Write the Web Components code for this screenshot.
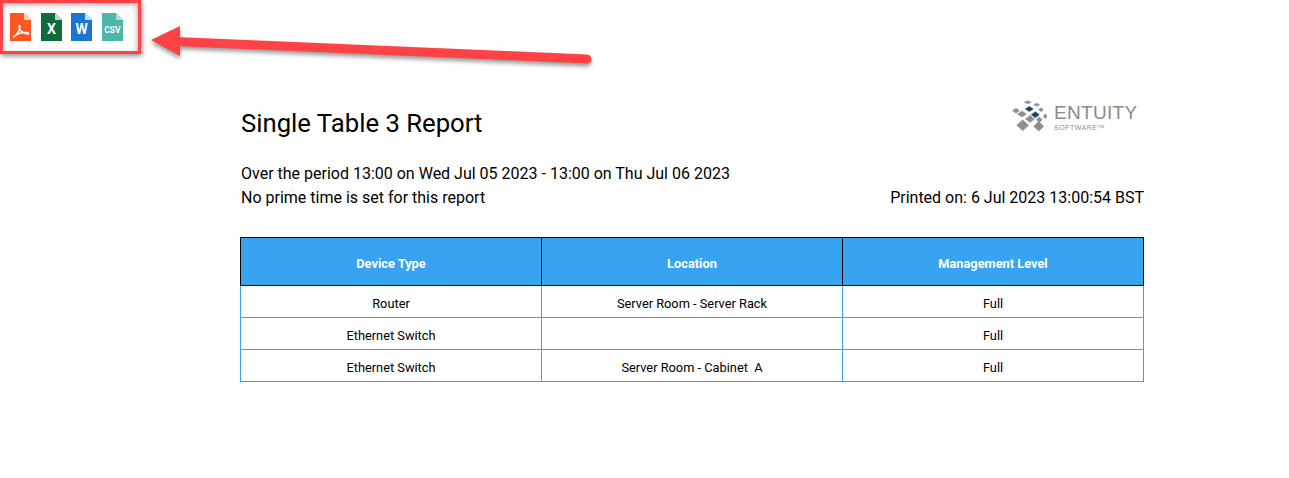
<!DOCTYPE html>
<html>
<head>
<meta charset="utf-8">
<style>
  html, body { margin: 0; background: #fff; }
  body { width: 1289px; height: 478px; overflow: hidden; position: relative; font-family: Roboto, "Liberation Sans", sans-serif; color: #000; }
</style>
</head>
<body>
<export-bar>
  <file-icon kind="pdf"></file-icon>
  <file-icon kind="xls"></file-icon>
  <file-icon kind="doc"></file-icon>
  <file-icon kind="csv"></file-icon>
</export-bar>
<call-out></call-out>
<report-page>
  <report-header slot="header" title="Single Table 3 Report" period="Over the period 13:00 on Wed Jul 05 2023 - 13:00 on Thu Jul 06 2023" prime="No prime time is set for this report" printed="Printed on: 6 Jul 2023 13:00:54 BST"></report-header>
  <report-table></report-table>
</report-page>

<script>
class FileIcon extends HTMLElement {
  connectedCallback() {
    const kinds = {
      pdf: { bg: '#ff5722', fold: '#ffccbc' },
      xls: { bg: '#0f6b3a', fold: '#b9dcc4', label: 'X', size: 14, y: 21 },
      doc: { bg: '#1976d2', fold: '#bbdefb', label: 'W', size: 14, y: 21 },
      csv: { bg: '#4db6ac', fold: '#b2dfdb', label: 'CSV', size: 8.5, y: 19.5 }
    };
    const k = kinds[this.getAttribute('kind')];
    const glyph = k.label
      ? `<text x="10.5" y="${k.y}" text-anchor="middle" font-family="Roboto, 'Liberation Sans', sans-serif" font-weight="700" font-size="${k.size}" fill="#fff">${k.label}</text>`
      : `<path d="M3.5 24C6.5 22 9.5 18 10 13.500C10.200 12 8.800 12 9 13.800C9.500 17 13 20 17.500 21C19 21.300 19 19.500 17.500 19.500C12 19 6.500 21 3.500 24Z" fill="none" stroke="#fff" stroke-width="1.500" stroke-linejoin="round"/>`;
    this.attachShadow({ mode: 'open' });
    this.shadowRoot.innerHTML = `
      <style>
        :host { display: block; width: 21px; height: 28px; }
        svg { display: block; }
      </style>
      <svg width="21" height="28" viewBox="0 0 21 28">
        <path d="M0 0H14L21 7V28H0Z" fill="${k.bg}"/>
        <path d="M14 0L21 7H14Z" fill="${k.fold}"/>
        ${glyph}
      </svg>
    `;
  }
}
customElements.define('file-icon', FileIcon);

class ExportBar extends HTMLElement {
  connectedCallback() {
    this.attachShadow({ mode: 'open' });
    this.shadowRoot.innerHTML = `
      <style>
        :host {
          position: absolute;
          left: 0;
          top: 0;
          width: 141px;
          height: 54px;
          border: 3px solid #ff4245;
          box-shadow: 1px 2px 5px rgba(0, 0, 0, 0.45), inset -1px 2px 5px rgba(0, 0, 0, 0.3);
          display: flex;
          gap: 9.6px;
          padding: 10px 0 0 7px;
          box-sizing: border-box;
        }
      </style>
      <slot></slot>
    `;
  }
}
customElements.define('export-bar', ExportBar);

class CallOut extends HTMLElement {
  connectedCallback() {
    this.attachShadow({ mode: 'open' });
    this.shadowRoot.innerHTML = `
      <style>
        :host { position: absolute; left: 140px; top: 20px; width: 460px; height: 50px; }
        svg { display: block; overflow: visible; filter: drop-shadow(0 3px 2px rgba(0, 0, 0, 0.4)); }
      </style>
      <svg width="460" height="50" viewBox="0 0 460 50">
        <path d="M11 20L40 6V36Z" fill="#ff4245"/>
        <line x1="36" y1="21.5" x2="447" y2="39" stroke="#ff4245" stroke-width="9" stroke-linecap="round"/>
      </svg>
    `;
  }
}
customElements.define('call-out', CallOut);

class ReportPage extends HTMLElement {
  connectedCallback() {
    this.attachShadow({ mode: 'open' });
    this.shadowRoot.innerHTML = `
      <style>
        :host { display: block; padding: 100px 145px 0 240px; }
        .stack { display: flex; flex-direction: column; gap: 27px; }
      </style>
      <div class="stack"><slot name="header"></slot><slot></slot></div>
    `;
  }
}
customElements.define('report-page', ReportPage);

class EntityLogo extends HTMLElement {
  connectedCallback() {
    // cx, cy, rx, ry of each tile in the mark
    const tiles = [
      [16.7, 2.3, 3.5, 1.5], [25.7, 4.7, 3, 1.5], [5, 10.7, 3.5, 2.5],
      [30, 9.7, 2.5, 2], [11, 14, 4.5, 3], [34.3, 16.3, 2, 2.5],
      [19, 19, 4.5, 3.5], [28.3, 19.7, 3, 3], [11.7, 25.3, 6, 5.5], [27.7, 26.3, 5, 5]
    ];
    const navy = [[18.3, 9, 4, 2.5], [24.3, 14.7, 4, 3]];
    const diamond = ([x, y, rx, ry]) => `M${x - rx} ${y}L${x} ${y - ry}L${x + rx} ${y}L${x} ${y + ry}Z`;
    this.attachShadow({ mode: 'open' });
    this.shadowRoot.innerHTML = `
      <style>
        :host { display: flex; align-items: flex-start; gap: 7px; width: 128px; height: 34px; font-family: "Liberation Sans", sans-serif; color: #8a8a8a; }
        .name { font-size: 19px; line-height: 20px; letter-spacing: 0.3px; margin-top: 3px; }
        .sub { font-size: 7px; line-height: 8px; letter-spacing: 0.5px; color: #8f8f8f; margin-top: 1px; }
        svg { flex: none; }
      </style>
      <svg width="36" height="33" viewBox="0 0 36 33">
        <path d="${tiles.map(diamond).join('')}" fill="#8f8f8f" stroke="#8f8f8f" stroke-width="0.5"/>
        <path d="${navy.map(diamond).join('')}" fill="#1f3f66" stroke="#1f3f66" stroke-width="0.5"/>
      </svg>
      <div>
        <div class="name">ENTUITY</div>
        <div class="sub">SOFTWARE™</div>
      </div>
    `;
  }
}
customElements.define('entity-logo', EntityLogo);

class ReportHeader extends HTMLElement {
  connectedCallback() {
    this.attachShadow({ mode: 'open' });
    this.shadowRoot.innerHTML = `
      <style>
        :host { display: block; padding-left: 1px; }
        .top { display: flex; justify-content: space-between; align-items: flex-start; height: 62px; }
        h1 { margin: 7px 0 0; font-weight: 400; font-size: 25.7px; line-height: 32px; }
        entity-logo { margin-right: 5px; }
        .meta { font-size: 16px; line-height: 24px; }
        .row { display: flex; justify-content: space-between; }
      </style>
      <div class="top">
        <h1>${this.getAttribute('title')}</h1>
        <entity-logo></entity-logo>
      </div>
      <div class="meta">
        <div>${this.getAttribute('period')}</div>
        <div class="row"><span>${this.getAttribute('prime')}</span><span>${this.getAttribute('printed')}</span></div>
      </div>
    `;
  }
}
customElements.define('report-header', ReportHeader);

class ReportTable extends HTMLElement {
  connectedCallback() {
    const rows = [
      ['Router', 'Server Room - Server Rack', 'Full'],
      ['Ethernet Switch', '', 'Full'],
      ['Ethernet Switch', 'Server Room - Cabinet&nbsp; A', 'Full']
    ];
    this.attachShadow({ mode: 'open' });
    this.shadowRoot.innerHTML = `
      <style>
        :host { display: block; font-size: 12.8px; }
        table { width: 100%; table-layout: fixed; border-collapse: collapse; text-align: center; }
        th { background: #38a3f1; color: #fff; font-weight: 700; height: 43px; border: 1px solid #000; padding: 4px 0 0; }
        td { height: 27px; border: 1px solid #38a3f1; padding: 4px 0 0; }
      </style>
      <table>
        <thead><tr><th>Device Type</th><th>Location</th><th>Management Level</th></tr></thead>
        <tbody>${rows.map(r => `<tr>${r.map(c => `<td>${c}</td>`).join('')}</tr>`).join('')}</tbody>
      </table>
    `;
  }
}
customElements.define('report-table', ReportTable);
</script>
</body>
</html>
